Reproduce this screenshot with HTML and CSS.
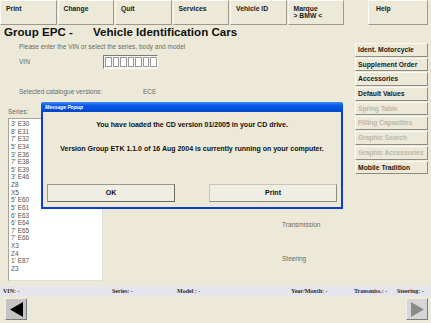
FILE: index.html
```html
<!DOCTYPE html>
<html lang="en">
<head>
<meta charset="UTF-8">
<meta name="viewport" content="width=device-width, initial-scale=1.0">
<title>Group EPC - Vehicle Identification Cars</title>
<link rel="stylesheet" href="styles.css">
</head>
<body>
    <div class="menubar">
        <div class="menu-btn">Print</div>
        <div class="menu-btn">Change</div>
        <div class="menu-btn">Quit</div>
        <div class="menu-btn">Services</div>
        <div class="menu-btn">Vehicle ID</div>
        <div class="menu-btn">Marque<br>&gt; BMW &lt;</div>
        <div class="menu-btn help-btn">Help</div>
    </div>

    <div class="main">
        <div class="content">
            <h1 class="title"><span>Group EPC -</span><span class="title-sub">Vehicle Identification Cars</span></h1>
            <p class="label prompt">Please enter the VIN or select the series, body and model</p>
            <div class="vin-row">
                <span class="label vin-label">VIN</span>
                <div class="vin-box">
                    <span></span><span></span><span></span><span></span><span></span><span></span><span></span>
                </div>
            </div>
            <div class="label catalogue">
                <span class="catalogue-name">Selected catalogue versions:</span>
                <span>ECE</span>
            </div>
            <div class="label series-label">Series:</div>
            <div class="series-area">
                <ul class="series-list">
                    <li>3' E30</li>
                    <li>8' E31</li>
                    <li>7' E32</li>
                    <li>5' E34</li>
                    <li>3' E36</li>
                    <li>7' E38</li>
                    <li>5' E39</li>
                    <li>3' E46</li>
                    <li>Z8</li>
                    <li>X5</li>
                    <li>5' E60</li>
                    <li>5' E61</li>
                    <li>6' E63</li>
                    <li>6' E64</li>
                    <li>7' E65</li>
                    <li>7' E66</li>
                    <li>X3</li>
                    <li>Z4</li>
                    <li>1' E87</li>
                    <li>Z3</li>
                </ul>
                <div class="specs">
                    <span class="label">Transmission</span>
                    <span class="label">Steering</span>
                </div>
            </div>
        </div>

        <div class="side">
            <div class="side-btn">Ident. Motorcycle</div>
            <div class="side-btn">Supplement Order</div>
            <div class="side-btn">Accessories</div>
            <div class="side-btn">Default Values</div>
            <div class="side-btn disabled">Spring Table</div>
            <div class="side-btn disabled">Filling Capacities</div>
            <div class="side-btn disabled">Graphic Search</div>
            <div class="side-btn disabled">Graphic Accessories</div>
            <div class="side-btn">Mobile Tradition</div>
        </div>
    </div>

    <div class="statusbar">
        <span class="st-vin">VIN: -</span>
        <span class="st-series">Series: -</span>
        <span class="st-model">Model : -</span>
        <span class="st-year">Year/Month: -</span>
        <span class="st-trans">Transmiss.: -</span>
        <span class="st-steer">Steering: -</span>
    </div>

    <div class="navbar">
        <div class="nav-btn">
            <svg width="13" height="15" viewBox="0 0 13 15"><polygon points="13,0 13,15 0,7.5" fill="#000"/></svg>
        </div>
        <div class="nav-btn nav-off">
            <svg width="13" height="15" viewBox="0 0 13 15"><polygon points="0,0 0,15 13,7.5" fill="#8a8a8a"/></svg>
        </div>
    </div>

    <!-- popup shown over the page -->
    <div class="popup">
        <div class="popup-title">Message Popup</div>
        <div class="popup-body">
            <p class="popup-msg">You have loaded the CD version 01/2005 in your CD drive.</p>
            <p class="popup-msg second">Version Group ETK 1.1.0 of 16 Aug 2004 is currently running on your computer.</p>
            <div class="popup-buttons">
                <div class="popup-btn default">OK</div>
                <div class="popup-btn">Print</div>
            </div>
        </div>
    </div>
</body>
</html>
```

FILE: styles.css
```css
    body {
        margin: 0;
        width: 431px;
        height: 323px;
        overflow: hidden;
        position: relative;
        font-family: "Liberation Sans", Arial, sans-serif;
        background-color: #ece9d8;
        color: #000;
    }
    p, h1, ul {
        margin: 0;
        padding: 0;
    }
    .menubar {
        display: flex;
        gap: 1px;
        height: 25px;
    }
    .menu-btn {
        width: 56.5px;
        box-sizing: border-box;
        height: 25px;
        padding: 4px 0 0 5px;
        font-size: 6.8px;
        font-weight: bold;
        line-height: 7px;
        color: #1a1a1a;
        border-top: 1px solid #fbfaf5;
        border-left: 1px solid #fbfaf5;
        border-right: 1px solid #9c998d;
        border-bottom: 1px solid #9c998d;
    }
    .help-btn {
        width: 60px;
        margin-left: auto;
        margin-right: 3px;
        padding-left: 7px;
    }
    .main {
        display: flex;
        height: 261px;
    }
    .content {
        width: 355px;
    }
    .title {
        height: 14px;
        line-height: 14px;
        padding-left: 4px;
        font-size: 11.6px;
        font-weight: bold;
        color: #111;
    }
    .title-sub {
        margin-left: 20px;
    }
    .label {
        font-size: 6.5px;
        line-height: 8px;
        color: #6a6a66;
    }
    .prompt {
        margin-top: 4px;
        padding-left: 19px;
    }
    .vin-row {
        display: flex;
        align-items: center;
        margin-top: 4px;
        height: 13px;
        padding-left: 19px;
    }
    .vin-label {
        width: 84px;
    }
    .vin-box {
        display: flex;
        height: 12px;
        border: 1px solid #7a7a7a;
        border-right-color: #fff;
        border-bottom-color: #fff;
        background: #f4f3ee;
    }
    .vin-box span {
        width: 6.5px;
        height: 10px;
        margin: 1px 0 0 1px;
        background: #fff;
        border: 0.5px solid #9a9a9a;
        box-sizing: border-box;
    }
    .catalogue {
        margin-top: 20px;
        padding-left: 19px;
        display: flex;
    }
    .catalogue-name {
        width: 124px;
    }
    .series-label {
        margin-top: 12px;
        padding-left: 8px;
    }
    .series-area {
        display: flex;
        margin-top: 2px;
    }
    .series-list {
        list-style: none;
        margin-left: 8px;
        width: 95px;
        height: 163px;
        box-sizing: border-box;
        padding: 1px 0 0 2px;
        background: #fff;
        border: 1px solid #a5a39a;
        border-right-color: #e2e0d6;
        border-bottom-color: #e2e0d6;
        font-size: 6.5px;
        line-height: 7.63px;
        color: #555;
    }
    .specs {
        display: flex;
        flex-direction: column;
        gap: 26px;
        margin-left: 179px;
        padding-top: 103px;
    }
    .side {
        width: 73px;
        padding-top: 18px;
        display: flex;
        flex-direction: column;
        gap: 1px;
    }
    .side-btn {
        height: 13.7px;
        box-sizing: border-box;
        padding-left: 2px;
        font-size: 6.8px;
        font-weight: bold;
        line-height: 12px;
        color: #1a1a1a;
        border-top: 1px solid #fbfaf5;
        border-left: 1px solid #fbfaf5;
        border-right: 1px solid #8f8c81;
        border-bottom: 1px solid #8f8c81;
        white-space: nowrap;
        overflow: hidden;
    }
    .side-btn.disabled {
        color: #bcb8ab;
        letter-spacing: -0.1px;
    }
    .statusbar {
        position: relative;
        height: 10px;
        background: #e6e4ec;
        font-family: "Liberation Serif", "Times New Roman", serif;
        font-size: 6px;
        font-weight: bold;
        line-height: 10px;
        color: #2a2a2a;
    }
    /* columns of the status line */
    .statusbar span {
        position: absolute;
        top: 0;
    }
    .st-vin { left: 3px; }
    .st-series { left: 112px; }
    .st-model { left: 177px; }
    .st-year { left: 291px; }
    .st-trans { left: 354px; }
    .st-steer { left: 397px; }
    .navbar {
        display: flex;
        justify-content: space-between;
        padding: 2px 3px 0 5px;
    }
    .nav-btn {
        width: 22px;
        height: 22px;
        box-sizing: border-box;
        display: flex;
        align-items: center;
        justify-content: center;
        background: #c4c4c4;
        border-top: 1px solid #eee;
        border-left: 1px solid #eee;
        border-right: 1px solid #7a7a7a;
        border-bottom: 1px solid #7a7a7a;
    }
    .nav-off {
        background: #d6d6d6;
    }
    .popup {
        position: absolute;
        left: 41px;
        top: 102px;
        width: 302px;
        height: 107px;
        box-sizing: border-box;
        border: 2px solid #0b3fd0;
        border-top: none;
        border-radius: 3px 3px 0 0;
        background: #ece9d8;
    }
    .popup-title {
        height: 10px;
        margin: 0 -2px;
        padding-left: 4px;
        border-radius: 3px 3px 0 0;
        background: linear-gradient(#3d8af7, #0a5ae6 35%, #0551de 70%, #0744c4);
        color: #fff;
        font-size: 5px;
        font-weight: bold;
        font-style: italic;
        line-height: 10px;
    }
    .popup-body {
        padding: 8px 4px 0 4px;
        text-align: center;
    }
    .popup-msg {
        font-size: 7px;
        font-weight: bold;
        line-height: 9px;
        color: #111;
    }
    .popup-msg.second {
        margin-top: 15px;
    }
    .popup-buttons {
        display: flex;
        justify-content: space-between;
        margin-top: 31px;
    }
    .popup-btn {
        width: 128px;
        height: 18px;
        box-sizing: border-box;
        font-size: 7px;
        font-weight: bold;
        line-height: 16px;
        color: #111;
        border: 1px solid #c9c6b9;
        border-right-color: #8e8b80;
        border-bottom-color: #8e8b80;
        background: #efede4;
    }
    .popup-btn.default {
        border: 1px solid #6c6a62;
        border-top-color: #9a978c;
        border-left-color: #9a978c;
    }
```
